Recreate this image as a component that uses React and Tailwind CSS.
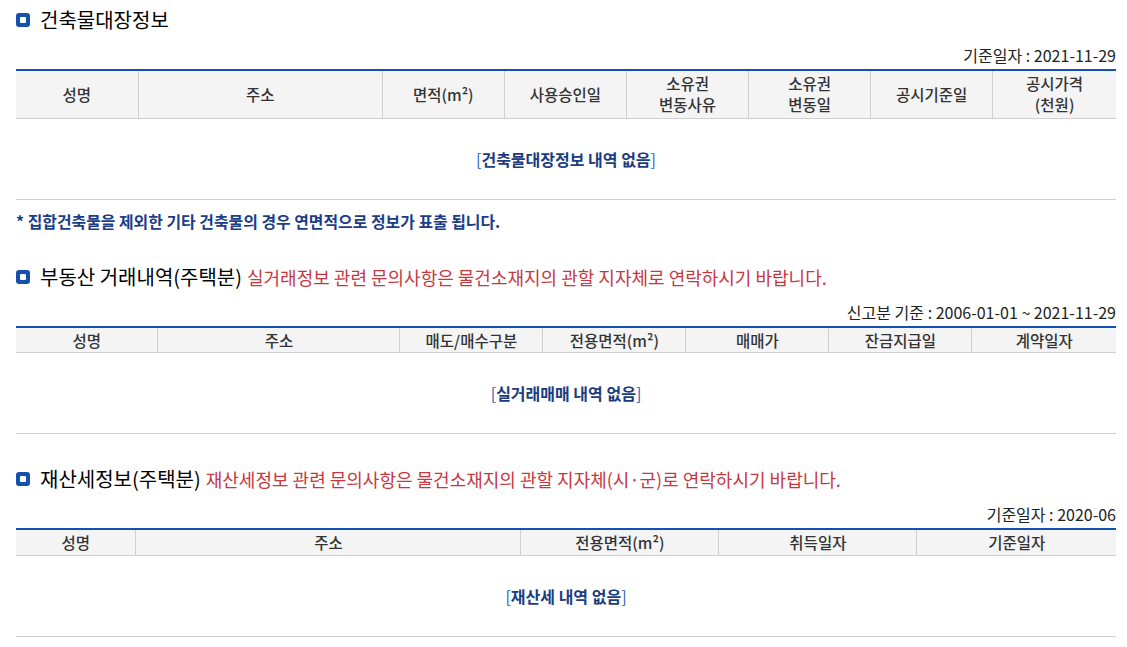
import React from 'react';

const font = { fontFamily: '"Noto Sans CJK KR", "Noto Sans", sans-serif' };

const Icon = () => (
  <span className="inline-flex items-center justify-center w-[14px] h-[14px] rounded-[3px] bg-[#1450ac] mr-[10px] shrink-0">
    <span className="w-[6px] h-[6px] rounded-[1px] bg-white" />
  </span>
);

const SectionTitle = ({ title, notice }) => (
  <h2 className="flex items-center text-[20px] leading-[24px] text-black font-normal whitespace-nowrap">
    <Icon />
    <span>{title}</span>
    {notice && <span className="ml-[5px] text-[18px] text-[#c7373f]">{notice}</span>}
  </h2>
);

const DataTable = ({ cols, headers, empty, tall }) => (
  <table className="w-full border-collapse table-fixed border-t-2 border-[#1450b4]">
    <colgroup>
      {cols.map((w, i) => (
        <col key={i} style={{ width: w }} />
      ))}
    </colgroup>
    <thead>
      <tr className="bg-[#f4f4f4]">
        {headers.map((h, i) => (
          <th
            key={i}
            className={`border-b border-[#cfcfcf] ${i > 0 ? 'border-l' : ''} font-medium text-[15.5px] text-[#333] ${tall ? 'h-[48px] leading-[21px]' : 'h-[26px] leading-[20px]'}`}
          >
            {h.map((line, j) => (
              <div key={j}>{line}</div>
            ))}
          </th>
        ))}
      </tr>
    </thead>
    <tbody>
      <tr>
        <td colSpan={cols.length} className="h-[81px] text-center border-b border-[#cfcfcf] text-[16px]">
          <span className="text-[#2a5bb8]">[</span>
          <span className="font-bold text-[#1b3c80]">{empty}</span>
          <span className="text-[#2a5bb8]">]</span>
        </td>
      </tr>
    </tbody>
  </table>
);

export default function App() {
  return (
    <div className="bg-white min-h-screen pl-4 pr-[11px] pt-[8px] text-[#222]" style={font}>
      <SectionTitle title="건축물대장정보" />
      <div className="text-right text-[16px] leading-[20px] mt-[13px] mb-[4px] text-[#222]">기준일자 : 2021-11-29</div>
      <DataTable
        tall
        cols={['11.1%', '22.2%', '11.1%', '11.1%', '11.1%', '11.1%', '11.1%', '11.2%']}
        headers={[
          ['성명'],
          ['주소'],
          ['면적(m²)'],
          ['사용승인일'],
          ['소유권', '변동사유'],
          ['소유권', '변동일'],
          ['공시기준일'],
          ['공시가격', '(천원)'],
        ]}
        empty="건축물대장정보 내역 없음"
      />
      <p className="mt-[12px] text-[15.9px] leading-[20px] font-bold text-[#1b3d88]">
        * 집합건축물을 제외한 기타 건축물의 경우 연면적으로 정보가 표출 됩니다.
      </p>

      <div className="mt-[33px]">
        <SectionTitle title="부동산 거래내역(주택분)" notice="실거래정보 관련 문의사항은 물건소재지의 관할 지자체로 연락하시기 바랍니다." />
      </div>
      <div className="text-right text-[16px] leading-[20px] mt-[13px] mb-[4px]">신고분 기준 : 2006-01-01 ~ 2021-11-29</div>
      <DataTable
        cols={['12.9%', '22%', '13%', '13%', '13%', '13%', '13.1%']}
        headers={[
          ['성명'],
          ['주소'],
          ['매도/매수구분'],
          ['전용면적(m²)'],
          ['매매가'],
          ['잔금지급일'],
          ['계약일자'],
        ]}
        empty="실거래매매 내역 없음"
      />

      <div className="mt-[33px]">
        <SectionTitle title="재산세정보(주택분)" notice="재산세정보 관련 문의사항은 물건소재지의 관할 지자체(시·군)로 연락하시기 바랍니다." />
      </div>
      <div className="text-right text-[16px] leading-[20px] mt-[13px] mb-[4px]">기준일자 : 2020-06</div>
      <DataTable
        cols={['10.9%', '35%', '18%', '18%', '18.1%']}
        headers={[['성명'], ['주소'], ['전용면적(m²)'], ['취득일자'], ['기준일자']]}
        empty="재산세 내역 없음"
      />
    </div>
  );
}
